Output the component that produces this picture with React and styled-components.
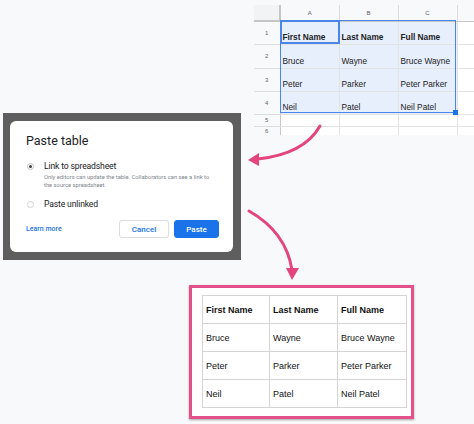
import styled, { createGlobalStyle } from "styled-components";

const GlobalStyle = createGlobalStyle`
  html, body {
    margin: 0;
    padding: 0;
    background: #f8f9fa;
  }
  body {
    font-family: "Liberation Sans", Arial, sans-serif;
  }
`;

const people = [
  { first: "Bruce", last: "Wayne", full: "Bruce Wayne" },
  { first: "Peter", last: "Parker", full: "Peter Parker" },
  { first: "Neil", last: "Patel", full: "Neil Patel" },
];

const sheetRowHeights = [23, 24, 23, 23];

const App = () => {
  return (
    <>
      <GlobalStyle />
      <Canvas>
        <SheetArea>
          <Sheet>
            <colgroup>
              <col style={{ width: 26 }} />
              <col style={{ width: 59 }} />
              <col style={{ width: 59 }} />
              <col style={{ width: 59 }} />
              <col style={{ width: 17 }} />
            </colgroup>
            <thead>
              <tr>
                <Corner />
                <ColHead>A</ColHead>
                <ColHead>B</ColHead>
                <ColHead>C</ColHead>
                <ColHead />
              </tr>
            </thead>
            <tbody>
              <tr style={{ height: sheetRowHeights[0] }}>
                <RowHead>1</RowHead>
                <Cell $sel $bold>First Name</Cell>
                <Cell $sel $bold>Last Name</Cell>
                <Cell $sel $bold>Full Name</Cell>
                <Cell />
              </tr>
              {people.map((p, i) => (
                <tr key={p.full} style={{ height: sheetRowHeights[i + 1] }}>
                  <RowHead>{i + 2}</RowHead>
                  <Cell $sel>{p.first}</Cell>
                  <Cell $sel>{p.last}</Cell>
                  <Cell $sel>{p.full}</Cell>
                  <Cell />
                </tr>
              ))}
              <tr style={{ height: 12 }}>
                <RowHead>5</RowHead>
                <Cell />
                <Cell />
                <Cell />
                <Cell />
              </tr>
              <tr style={{ height: 10 }}>
                <RowHead>6</RowHead>
                <Cell />
                <Cell />
                <Cell />
                <Cell />
              </tr>
            </tbody>
          </Sheet>
          <Selection>
            <ActiveCell />
            <Handle />
          </Selection>
        </SheetArea>

        <DialogFrame>
          <Card>
            <Title>Paste table</Title>
            <Option>
              <Radio $checked />
              <OptionText>
                <OptionLabel>Link to spreadsheet</OptionLabel>
                <OptionHint>
                  Only editors can update the table. Collaborators can see a link to
                  the source spreadsheet.
                </OptionHint>
              </OptionText>
            </Option>
            <Option $last>
              <Radio />
              <OptionText>
                <OptionLabel>Paste unlinked</OptionLabel>
              </OptionText>
            </Option>
            <Footer>
              <LearnMore>Learn more</LearnMore>
              <Buttons>
                <Button>Cancel</Button>
                <Button $primary>Paste</Button>
              </Buttons>
            </Footer>
          </Card>
        </DialogFrame>

        <Result>
          <ResultTable>
            <colgroup>
              <col style={{ width: 67 }} />
              <col style={{ width: 68 }} />
              <col style={{ width: 69 }} />
            </colgroup>
            <tbody>
              <tr>
                <ResultCell $bold>First Name</ResultCell>
                <ResultCell $bold>Last Name</ResultCell>
                <ResultCell $bold>Full Name</ResultCell>
              </tr>
              {people.map((p) => (
                <tr key={p.full}>
                  <ResultCell>{p.first}</ResultCell>
                  <ResultCell>{p.last}</ResultCell>
                  <ResultCell>{p.full}</ResultCell>
                </tr>
              ))}
            </tbody>
          </ResultTable>
        </Result>

        <Arrows viewBox="0 0 474 424" width="474" height="424">
          <path
            d="M320 126 Q 304 154 258 159"
            fill="none"
            stroke="#e4457c"
            strokeWidth="3"
            strokeLinecap="round"
          />
          <polygon points="248,160 259,153 259,166" fill="#e4457c" />
          <path
            d="M249 211 Q 286 232 292 270"
            fill="none"
            stroke="#e4457c"
            strokeWidth="3"
            strokeLinecap="round"
          />
          <polygon points="292,280 286,268 299,268" fill="#e4457c" />
        </Arrows>
      </Canvas>
    </>
  );
};

export default App;

const Canvas = styled.div`
  position: relative;
  width: 474px;
  height: 424px;
  overflow: hidden;
  display: grid;
  grid-template-columns: 3px 238px 13px 220px;
  grid-template-rows: 5px 108px 22px 125px 25px 134px;
`;

const SheetArea = styled.div`
  position: relative;
  grid-column: 4;
  grid-row: 2 / 4;
  background: #ffffff;
  overflow: hidden;
`;

const Sheet = styled.table`
  border-collapse: collapse;
  table-layout: fixed;
  width: 220px;
  font-family: "Liberation Sans", Arial, sans-serif;
`;

const Corner = styled.th`
  height: 15px;
  padding: 0;
  background: #f1f3f4;
  border-right: 2px solid #c4c7c5;
  border-bottom: 2px solid #c4c7c5;
`;

const ColHead = styled.th`
  height: 15px;
  padding: 0;
  background: #f8f9fa;
  border-right: 1px solid #dadce0;
  border-bottom: 1px solid #c4c7c5;
  font-size: 6px;
  font-weight: 400;
  color: #5f6368;
  text-align: center;
`;

const RowHead = styled.td`
  padding: 0;
  background: #f8f9fa;
  border-bottom: 1px solid #dadce0;
  border-right: 1px solid #c4c7c5;
  font-size: 6px;
  color: #5f6368;
  text-align: center;
  vertical-align: middle;
`;

const Cell = styled.td`
  padding: 0 2px 2px;
  border-right: 1px solid #e2e3e3;
  border-bottom: 1px solid #e2e3e3;
  background: ${({ $sel }) => ($sel ? "#e8effc" : "#ffffff")};
  font-size: 8.3px;
  font-weight: ${({ $bold }) => ($bold ? 700 : 400)};
  color: #202124;
  vertical-align: bottom;
  white-space: nowrap;
  overflow: hidden;
`;

const Selection = styled.div`
  position: absolute;
  left: 26px;
  top: 15px;
  width: 176px;
  height: 93px;
  border: 1px solid #4a86e8;
  box-sizing: border-box;
  pointer-events: none;
`;

const ActiveCell = styled.div`
  position: absolute;
  left: -1px;
  top: -1px;
  width: 60px;
  height: 24px;
  border: 2px solid #4a86e8;
  box-sizing: border-box;
`;

const Handle = styled.div`
  position: absolute;
  right: -3px;
  bottom: -3px;
  width: 5px;
  height: 5px;
  background: #1a73e8;
`;

const DialogFrame = styled.div`
  grid-column: 2;
  grid-row: 3 / 5;
  min-width: 0;
  background: #5e5e5e;
  padding: 8px 8px 8px 7px;
  box-sizing: border-box;
  display: flex;
`;

const Card = styled.div`
  flex: 1;
  min-width: 0;
  background: #ffffff;
  border-radius: 6px;
  padding: 12px 14px 0 16px;
  display: flex;
  flex-direction: column;
  font-family: Roboto, "Liberation Sans", Arial, sans-serif;
`;

const Title = styled.div`
  font-size: 12.5px;
  color: #202124;
  line-height: 16px;
  margin-bottom: 12px;
`;

const Option = styled.div`
  display: flex;
  align-items: flex-start;
  gap: 10px;
  margin-bottom: ${({ $last }) => ($last ? "10px" : "10px")};
`;

const Radio = styled.span`
  flex: none;
  width: 7px;
  height: 7px;
  margin: 2px 0 0 1px;
  border-radius: 50%;
  border: 1px solid ${({ $checked }) => ($checked ? "#c6c6c6" : "#d4d4d4")};
  box-sizing: border-box;
  display: flex;
  align-items: center;
  justify-content: center;
  &::after {
    content: "";
    width: 3px;
    height: 3px;
    border-radius: 50%;
    background: ${({ $checked }) => ($checked ? "#3c4043" : "transparent")};
  }
`;

const OptionText = styled.div`
  display: flex;
  flex-direction: column;
`;

const OptionLabel = styled.div`
  font-size: 8.6px;
  letter-spacing: -0.15px;
  color: #202124;
  line-height: 11px;
`;

const OptionHint = styled.div`
  margin-top: 1px;
  font-size: 5.8px;
  line-height: 8px;
  color: #80868b;
  width: 168px;
`;

const Footer = styled.div`
  display: flex;
  align-items: center;
  justify-content: space-between;
`;

const LearnMore = styled.span`
  font-size: 7px;
  font-weight: 500;
  color: #1a73e8;
`;

const Buttons = styled.div`
  display: flex;
  gap: 5px;
`;

const Button = styled.button`
  width: ${({ $primary }) => ($primary ? "45px" : "50px")};
  height: 18px;
  padding: 0;
  border-radius: 3px;
  border: 1px solid ${({ $primary }) => ($primary ? "#1a73e8" : "#dadce0")};
  background: ${({ $primary }) => ($primary ? "#1a73e8" : "#ffffff")};
  color: ${({ $primary }) => ($primary ? "#ffffff" : "#1a73e8")};
  font-family: Roboto, "Liberation Sans", Arial, sans-serif;
  font-size: 8px;
  font-weight: 500;
`;

const Result = styled.div`
  grid-column: 1 / -1;
  grid-row: 6;
  margin-left: 189px;
  width: 225px;
  height: 134px;
  box-sizing: border-box;
  border: 3px solid #e4508a;
  background: #ffffff;
  box-shadow: 0 1px 2px rgba(0, 0, 0, 0.35);
  padding: 7px 4px 8px 10px;
`;

const ResultTable = styled.table`
  border-collapse: collapse;
  table-layout: fixed;
  width: 204px;
`;

const ResultCell = styled.td`
  height: 27px;
  padding: 0 3px;
  border: 1px solid #d4d4d4;
  font-size: 9px;
  font-weight: ${({ $bold }) => ($bold ? 700 : 400)};
  color: #111111;
  white-space: nowrap;
  vertical-align: middle;
`;

const Arrows = styled.svg`
  position: absolute;
  left: 0;
  top: 0;
  pointer-events: none;
`;
